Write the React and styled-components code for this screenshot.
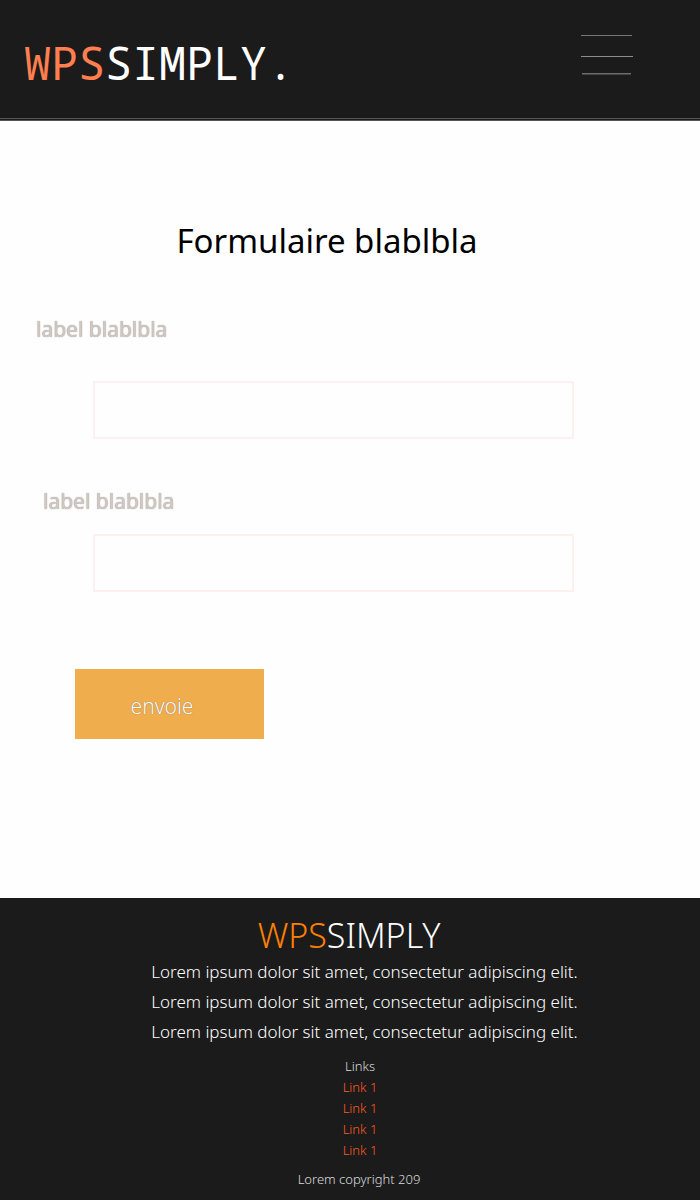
import React from "react";
import styled, { createGlobalStyle } from "styled-components";

const GlobalStyle = createGlobalStyle`
  *, *::before, *::after { box-sizing: border-box; }
  body {
    margin: 0;
    background: #fefefe;
    font-family: "Noto Sans", "Open Sans", sans-serif;
  }
  h1, h2, p, ul { margin: 0; padding: 0; font-weight: 400; }
`;

const Page = styled.div`
  display: flex;
  flex-direction: column;
  min-height: 100vh;
`;

const Header = styled.header`
  display: flex;
  justify-content: space-between;
  align-items: flex-start;
  padding: 32px 67px 24px 24px;
  background: #1b1b1b;
  border-bottom: 3px double #555;
`;

const Logo = styled.a`
  color: #fff;
  font-family: "Noto Sans Mono", "DejaVu Sans Mono", monospace;
  font-size: 45px;
  line-height: 62px;
  text-decoration: none;
`;

const Accent = styled.span`
  color: ${({ $color }) => $color};
`;

const MenuButton = styled.button`
  display: flex;
  padding: 0;
  border: 0;
  background: none;
  cursor: pointer;
`;

const Main = styled.main`
  flex: 1;
  padding: 96px 126px 158px 36px;
`;

const Title = styled.h1`
  padding-left: 44px;
  color: #000;
  font-size: 33px;
  line-height: 48px;
  text-align: center;
`;

const Form = styled.form`
  display: flex;
  flex-direction: column;
  padding-top: 50px;
`;

const Field = styled.div`
  display: flex;
  flex-direction: column;
  gap: ${({ $gap }) => $gap}px;
  margin-bottom: 48px;
`;

const Label = styled.label`
  padding-left: ${({ $indent }) => $indent || 0}px;
  color: #d2c8c3;
  font-size: 21px;
  line-height: 28px;
  text-shadow: 0 0 1px #8c8480;
`;

const TextInput = styled.input`
  width: auto;
  height: 58px;
  margin-left: 57px;
  padding: 0 16px;
  border: 2px solid #fff0f0;
  background: #fefefe;
  font: inherit;
  font-size: 21px;
`;

const Submit = styled.button`
  align-self: flex-start;
  width: 189px;
  height: 70px;
  margin: 29px 0 0 39px;
  padding: 3px 15px 0 0;
  border: 0;
  background: #f0ad4e;
  color: #fff;
  font-family: inherit;
  font-size: 21px;
  font-weight: 300;
  text-shadow: 0 0 1px #6a6050;
  cursor: pointer;
`;

const Footer = styled.footer`
  display: flex;
  flex-direction: column;
  align-items: center;
  padding: 16px 0 10px 20px;
  background: #1b1b1b;
  color: #fff;
  font-weight: 300;
`;

const FooterLogo = styled.h2`
  padding-right: 22px;
  font-size: 34px;
  font-weight: 300;
  line-height: 43px;
`;

const Text = styled.p`
  padding-left: 9px;
  font-size: 17px;
  font-weight: 300;
  line-height: 30px;
`;

const LinksTitle = styled.p`
  padding-top: 9px;
  color: #ddd;
  font-size: 13px;
  font-weight: 300;
  line-height: 21px;
`;

const LinkList = styled.ul`
  list-style: none;
  font-size: 13px;
  line-height: 21px;
`;

const FooterLink = styled.a`
  color: #ff5a1f;
  font-weight: 300;
  text-decoration: none;
`;

const Copyright = styled.p`
  padding: 8px 2px 0 0;
  color: #ddd;
  font-size: 13px;
  font-weight: 300;
  line-height: 21px;
`;

const paragraphs = [1, 2, 3];
const links = [1, 2, 3, 4];

export default function App() {
  return (
    <Page>
      <GlobalStyle />
      <Header>
        <Logo href="#"><Accent $color="#ff7f50">WPS</Accent>SIMPLY.</Logo>
        <MenuButton type="button" aria-label="Menu">
          <svg width="52" height="46" viewBox="0 0 52 46" aria-hidden="true">
            <path d="M0 3.5H51" stroke="#777" />
            <path d="M0 24.5H52" stroke="#8c8c8c" />
            <path d="M1 41.5H50" stroke="#6c6c6c" />
            <path d="M1 42.5H50" stroke="#444" />
          </svg>
        </MenuButton>
      </Header>
      <Main>
        <Title>Formulaire blablbla</Title>
        <Form onSubmit={(e) => e.preventDefault()}>
          <Field $gap={38}>
            <Label htmlFor="first">label blablbla</Label>
            <TextInput id="first" type="text" />
          </Field>
          <Field $gap={19}>
            <Label htmlFor="second" $indent={7}>label blablbla</Label>
            <TextInput id="second" type="text" />
          </Field>
          <Submit type="submit">envoie</Submit>
        </Form>
      </Main>
      <Footer>
        <FooterLogo><Accent $color="#ff8000">WPS</Accent>SIMPLY</FooterLogo>
        {paragraphs.map((n) => (
          <Text key={n}>Lorem ipsum dolor sit amet, consectetur adipiscing elit.</Text>
        ))}
        <LinksTitle>Links</LinksTitle>
        <LinkList>
          {links.map((n) => (
            <li key={n}><FooterLink href="#">Link 1</FooterLink></li>
          ))}
        </LinkList>
        <Copyright>Lorem copyright 209</Copyright>
      </Footer>
    </Page>
  );
}
